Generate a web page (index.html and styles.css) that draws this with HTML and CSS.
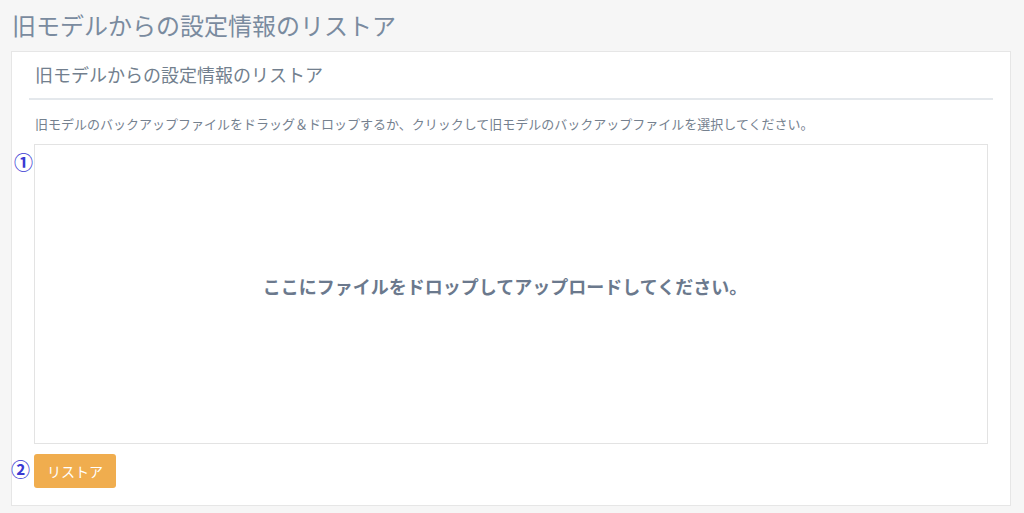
FILE: index.html
```html
<!DOCTYPE html>
<html lang="ja">
<head>
<meta charset="utf-8">
<title>旧モデルからの設定情報のリストア</title>
<link rel="stylesheet" href="styles.css">
</head>
<body>
<h1 class="page-title">旧モデルからの設定情報のリストア</h1>
<div class="card">
  <div class="card-header">
    <h2 class="card-title">旧モデルからの設定情報のリストア</h2>
  </div>
  <div class="card-body">
    <p class="desc">旧モデルのバックアップファイルをドラッグ＆ドロップするか、クリックして旧モデルのバックアップファイルを選択してください。</p>
    <div class="drop-wrap">
      <span class="marker marker-1">①</span>
      <div class="dropzone">ここにファイルをドロップしてアップロードしてください。</div>
    </div>
    <div class="btn-wrap">
      <span class="marker marker-2">②</span>
      <button class="btn-restore" type="button">リストア</button>
    </div>
  </div>
</div>
</body>
</html>
```

FILE: styles.css
```css
html, body {
  margin: 0;
  padding: 0;
}
body {
  background: #f6f6f6;
  font-family: "Noto Sans CJK JP", "Noto Sans", sans-serif;
  color: #76869a;
  width: 1024px;
  height: 513px;
  overflow: hidden;
}
.page-title {
  margin: 0;
  padding: 8px 12px 9px;
  font-size: 24px;
  line-height: 34px;
  font-weight: normal;
  color: #7a8b9f;
}
.card {
  margin-left: 11px;
  width: 964px;
  height: 453px;
  background: #fff;
  border: 1px solid #e6e6e6;
  padding: 0 17px;
  box-sizing: content-box;
}
.card-header {
  padding-top: 9px;
  padding-bottom: 10px;
  border-bottom: 2px solid #e4e8ec;
}
.card-title {
  margin: 0;
  padding-left: 6px;
  font-size: 18px;
  line-height: 27px;
  font-weight: normal;
  color: #727f8e;
}
.card-body {
  padding: 0 5px;
}
.desc {
  margin: 14px 0 10px;
  padding-left: 1px;
  font-size: 13px;
  line-height: 20px;
  color: #75818f;
}
.drop-wrap {
  position: relative;
}
.dropzone {
  height: 300px;
  box-sizing: border-box;
  border: 1px solid #e3e3e3;
  display: flex;
  align-items: center;
  justify-content: center;
  font-size: 18px;
  font-weight: bold;
  color: #6b798d;
  padding-bottom: 16px;
  padding-right: 12px;
}
.btn-wrap {
  position: relative;
  margin-top: 10px;
  display: flex;
}
.btn-restore {
  width: 82px;
  height: 34px;
  border: none;
  border-radius: 3px;
  background: #f0ad4e;
  color: #fff;
  font-family: "Noto Sans CJK JP", "Noto Sans", sans-serif;
  font-size: 14px;
  padding: 0;
  cursor: pointer;
}
.marker {
  position: absolute;
  font-size: 19px;
  line-height: 19px;
  color: #3a3ad2;
  font-weight: bold;
}
.marker-1 {
  left: -20px;
  top: 8px;
}
.marker-2 {
  left: -23px;
  top: 5px;
}
```
